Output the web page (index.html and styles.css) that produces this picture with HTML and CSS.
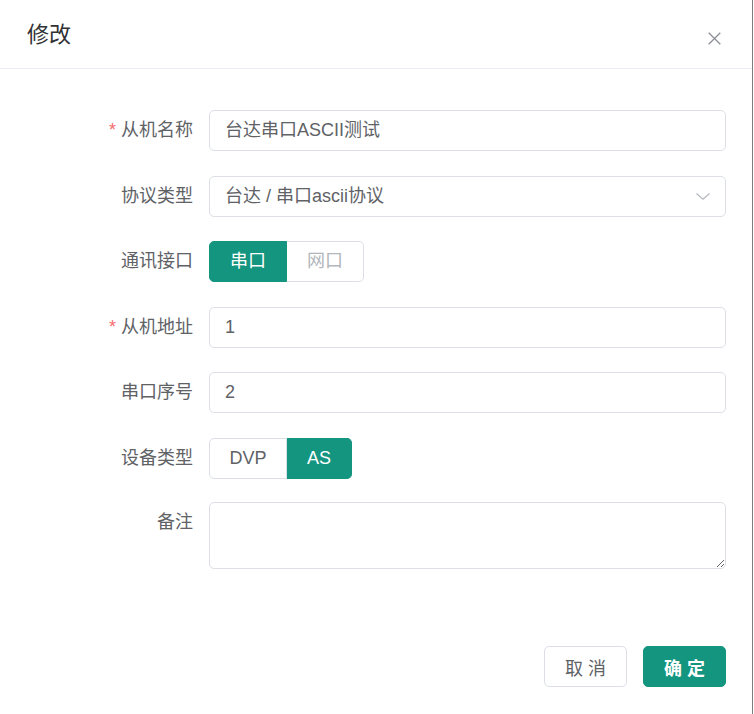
FILE: index.html
```html
<!DOCTYPE html>
<html lang="zh-CN">
<head>
<meta charset="utf-8">
<title>修改</title>
<link rel="stylesheet" href="styles.css">
</head>
<body>
<div class="dialog">
  <div class="header">
    <span class="title">修改</span>
    <svg class="close" width="13" height="13" viewBox="0 0 13 13"><path d="M0.7 0.7L12.3 12.3M12.3 0.7L0.7 12.3" stroke="#8c8f95" stroke-width="1.3" fill="none"/></svg>
  </div>
  <div class="form">
    <div class="row">
      <label class="label"><span class="req">*</span>从机名称</label>
      <div class="input">台达串口ASCII测试</div>
    </div>
    <div class="row">
      <label class="label">协议类型</label>
      <div class="input select">台达 / 串口ascii协议
        <svg class="arrow" width="14" height="7" viewBox="0 0 14 7"><path d="M0.5 0.5L7 6.2L13.5 0.5" stroke="#b4b7bd" stroke-width="1.2" fill="none"/></svg>
      </div>
    </div>
    <div class="row">
      <label class="label">通讯接口</label>
      <div class="group">
        <span class="rb first active w78">串口</span>
        <span class="rb last muted w77">网口</span>
      </div>
    </div>
    <div class="row">
      <label class="label"><span class="req">*</span>从机地址</label>
      <div class="input">1</div>
    </div>
    <div class="row">
      <label class="label">串口序号</label>
      <div class="input">2</div>
    </div>
    <div class="row">
      <label class="label">设备类型</label>
      <div class="group">
        <span class="rb first w78">DVP</span>
        <span class="rb last active w65">AS</span>
      </div>
    </div>
    <div class="row row-ta">
      <label class="label">备注</label>
      <textarea class="textarea"></textarea>
    </div>
  </div>
  <div class="footer">
    <button class="btn">取 消</button>
    <button class="btn primary">确 定</button>
  </div>
</div>
</body>
</html>
```
FILE: styles.css
```css
html, body {
  margin: 0;
  padding: 0;
  background: #fff;
}
body {
  font-family: "Liberation Sans", "Noto Sans CJK SC", sans-serif;
  color: #606266;
}
.dialog {
  width: 753px;
  height: 714px;
  box-sizing: border-box;
  border-right: 1px solid #7d7d7d;
  background: #fff;
  display: flex;
  flex-direction: column;
}
.header {
  height: 69px;
  box-sizing: border-box;
  border-bottom: 1px solid #ebeef5;
  display: flex;
  justify-content: space-between;
  align-items: flex-start;
  padding: 24px 31px 0 27px;
}
.title {
  font-size: 22px;
  line-height: 22px;
  color: #303133;
}
.close {
  margin-top: 8px;
}
.form {
  padding-top: 41px;
  display: flex;
  flex-direction: column;
}
.row {
  display: flex;
  align-items: flex-start;
  margin-bottom: 24.6px;
}
.row-ta {
  margin-top: -1.5px;
}
.label {
  width: 193px;
  margin-right: 16px;
  text-align: right;
  font-size: 18px;
  line-height: 41px;
  color: #606266;
  flex-shrink: 0;
}
.req {
  color: #f56c6c;
  margin-right: 5px;
}
.input {
  width: 517px;
  height: 41px;
  box-sizing: border-box;
  border: 1px solid #dcdfe6;
  border-radius: 5px;
  padding: 0 15px;
  font-size: 18px;
  line-height: 39px;
  color: #606266;
}
.select {
  position: relative;
}
.arrow {
  position: absolute;
  right: 15px;
  top: 16px;
}
.group {
  display: flex;
  height: 41px;
}
.rb {
  box-sizing: border-box;
  height: 41px;
  border: 1px solid #dcdfe6;
  font-size: 18px;
  line-height: 39px;
  text-align: center;
  color: #606266;
  background: #fff;
}
.rb.first {
  border-radius: 5px 0 0 5px;
}
.rb.last {
  border-left: 0;
  border-radius: 0 5px 5px 0;
}
.rb.active {
  background: #13957f;
  border-color: #13957f;
  color: #fff;
}
.rb.muted {
  color: #b3b6bc;
}
.w78 { width: 78px; }
.w77 { width: 77px; }
.w65 { width: 65px; }
.textarea {
  width: 517px;
  height: 67px;
  box-sizing: border-box;
  border: 1px solid #dcdfe6;
  border-radius: 5px;
  padding: 6px 15px;
  font-family: inherit;
  font-size: 18px;
  resize: vertical;
  margin: 0;
  outline: none;
}
.footer {
  margin-top: auto;
  margin-bottom: 27px;
  display: flex;
  justify-content: flex-end;
  gap: 16px;
  padding-right: 26px;
}
.btn {
  width: 83px;
  height: 41px;
  box-sizing: border-box;
  border: 1px solid #dcdfe6;
  border-radius: 5px;
  background: #fff;
  color: #606266;
  font-family: inherit;
  font-size: 18px;
  padding: 0;
  cursor: pointer;
}
.btn.primary {
  background: #13957f;
  border-color: #13957f;
  color: #fff;
  font-weight: 600;
}
```
